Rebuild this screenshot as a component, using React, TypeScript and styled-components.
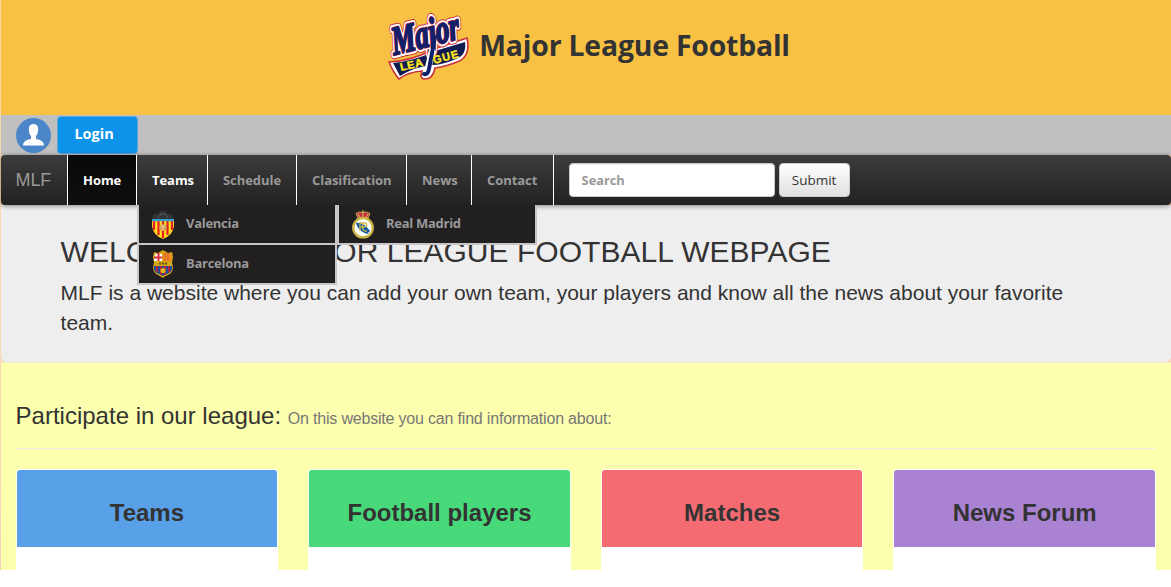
import React from "react";
import styled, { createGlobalStyle } from "styled-components";

const humanist = `"Open Sans", "Noto Sans", sans-serif`;

const GlobalStyle = createGlobalStyle`
  * { box-sizing: border-box; }
  body {
    margin: 0;
    background: #fff;
    color: #333;
    font: 14px/20px "Liberation Sans", Arial, sans-serif;
    overflow: hidden;
  }
  h1, h2, h3, p, ul { margin: 0; padding: 0; }
  ul { list-style: none; }
`;

const Page = styled.div`
  height: 570px;
  padding-left: 0.6px;
  overflow: hidden;
  background: linear-gradient(#f8d9a8, #fbd7b4 50%, #f3d3bd);
`;

const Header = styled.header`
  display: flex;
  justify-content: center;
  height: 115px;
  padding-top: 11px;
  background: #f8c144;
`;

const Logo = styled.svg`
  width: 88px;
  height: 72px;
  flex: none;
  overflow: visible;
`;

const Title = styled.h1`
  width: 310px;
  margin: 14px 0 0 9px;
  font: 700 28.4px/40px ${humanist};
  letter-spacing: -0.2px;
  white-space: nowrap;
`;

const UserBar = styled.div`
  display: flex;
  align-items: flex-start;
  gap: 6px;
  height: 40px;
  padding: 1px 15px 0;
  background: #c0c0c0;
`;

const Avatar = styled.svg`
  width: 35px;
  height: 35px;
  margin-top: 2px;
`;

const LoginButton = styled.button`
  width: 81px;
  height: 38px;
  padding: 0 6px 3px 0;
  border: 1px solid #5da5da;
  border-radius: 4px;
  background: #0d93ea;
  color: #fff;
  font: 700 14.5px/20px ${humanist};
`;

const NavBar = styled.nav`
  position: relative;
  z-index: 2;
  display: flex;
  height: 50px;
  border-radius: 4px;
  background: linear-gradient(#3c3c3c, #222);
  box-shadow: 0 1px 5px rgba(0, 0, 0, 0.45);
`;

const Brand = styled.div`
  width: 67px;
  padding: 15px 0 0 15px;
  border-right: 1px solid #fff;
  color: #999;
  font-size: 18px;
  letter-spacing: -0.2px;
`;

const NavItem = styled.div<{ $width: number; $active?: boolean; $lit?: boolean }>`
  position: relative;
  width: ${(p) => p.$width}px;
  padding: 15px 0 0 15.4px;
  border-right: 1px solid #fff;
  background: ${(p) => (p.$active ? "linear-gradient(#080808, #0f0f0f)" : "none")};
  color: ${(p) => (p.$active || p.$lit ? "#fff" : "#999")};
  font: 700 13px/20px ${humanist};
  letter-spacing: -0.05px;
  white-space: nowrap;
`;

const Dropdown = styled.ul`
  position: absolute;
  top: 50px;
  left: 0;
  display: grid;
  grid-template-columns: 200px 200px;
`;

const DropdownItem = styled.li`
  display: flex;
  align-items: center;
  gap: 11.4px;
  height: 40px;
  padding-left: 12px;
  border: solid #c8c6c8;
  border-width: 0 2px 2px;
  background: #221f20;
  color: #999;
  font: 700 13px/20px ${humanist};
  letter-spacing: -0.28px;

  span { padding-bottom: 2px; }
`;

const Crest = styled.svg`
  width: 24px;
  height: 30px;
`;

const SearchForm = styled.form`
  display: flex;
  gap: 4px;
  padding: 8px 0 0 15px;
`;

const SearchInput = styled.input`
  width: 206px;
  height: 34px;
  padding: 6px 12px;
  border: 1px solid #ccc;
  border-radius: 4px;
  box-shadow: inset 0 1px 1px rgba(0, 0, 0, 0.075);
  font: 700 12.8px/20px ${humanist};

  &::placeholder { color: #999; opacity: 1; }
`;

const SubmitButton = styled.button`
  width: 71px;
  height: 34px;
  padding: 0;
  border: 1px solid #ccc;
  border-radius: 4px;
  background: linear-gradient(#fff, #e0e0e0);
  color: #333;
  font: 400 13.5px/20px ${humanist};
`;

const Jumbotron = styled.section`
  height: 157px;
  padding: 30px 60px 0;
  border-radius: 0 0 6px 6px;
  background: #eee;

  h2 { font-weight: 400; font-size: 30px; line-height: 33px; letter-spacing: 0.03px; white-space: nowrap; }
  p { margin-top: 10px; font-size: 21px; line-height: 30px; }
`;

const Content = styled.main`
  height: 208px;
  padding: 40px 15px 0;
  border-top: 1px solid #f3ecd0;
  background: #fcffad;
`;

const SectionHeading = styled.h3`
  height: 46px;
  border-bottom: 1px solid #eee;
  font-weight: 400;
  font-size: 24px;
  line-height: 26px;

  small { font-size: 16px; letter-spacing: -0.19px; color: #777; }
`;

const CardGrid = styled.div`
  display: grid;
  grid-template-columns: repeat(4, 1fr);
  gap: 30px;
  margin-top: 20px;
`;

const Card = styled.article`
  height: 140px;
  border: 1px solid #fff;
  border-radius: 4px;
  background: #fff;
`;

const CardHeader = styled.h3<{ $color: string }>`
  height: 77px;
  padding-top: 30px;
  border-radius: 3px 3px 0 0;
  background: ${(p) => p.$color};
  font-size: 24px;
  line-height: 26px;
  text-align: center;
`;

const outlines = [
  { stroke: "#c9303a", width: 8.4 },
  { stroke: "#fff", width: 6.4 },
  { stroke: "#dc3540", width: 2.6 },
  { stroke: "#10206a", width: 1.6 },
];

const LeagueLogo = () => (
  <Logo viewBox="0 0 88 72" aria-label="Major League">
    <path
      d="M7 51 Q30 50 52 38 L85 27 Q89 46 75 51 Q62 56 53 57 Q51 68 43 68 Q37 68 40 60 Q26 61 17 68 Q11 61 7 51Z"
      fill="#fff"
      stroke="#c9303a"
      strokeWidth="1.6"
    />
    <path d="M11 52 Q32 50 53 40 L83 31 Q85 44 74 48 Q60 54 50 54 Q32 56 18 65Z" fill="#101b52" />
    {outlines.map((o) => (
      <text
        key={o.stroke}
        transform="translate(12 44) rotate(-14) skewX(-4)"
        fontFamily="Liberation Serif, serif"
        fontStyle="italic"
        fontWeight="700"
        fontSize="40"
        textLength="69"
        lengthAdjust="spacingAndGlyphs"
        fill="#10206a"
        stroke={o.stroke}
        strokeWidth={o.width}
        strokeLinejoin="round"
      >
        Major
      </text>
    ))}
    <path d="M50 40 L45 62" stroke="#fff" strokeWidth="6.5" strokeLinecap="round" />
    <path d="M53 26 L47 58 Q46 64 42 63" stroke="#10206a" strokeWidth="4" strokeLinecap="round" fill="none" />
    <text transform="translate(19 60) rotate(-13)" fontFamily="Liberation Sans, sans-serif" fontWeight="700" fontSize="11" fill="#ffe81c" stroke="#ffe81c" strokeWidth="0.4" textLength="23">
      LEA
    </text>
    <text transform="translate(52 53) rotate(-15)" fontFamily="Liberation Sans, sans-serif" fontWeight="700" fontSize="11" fill="#ffe81c" stroke="#ffe81c" strokeWidth="0.4" textLength="26">
      GUE
    </text>
  </Logo>
);

const ValenciaCrest = () => (
  <Crest viewBox="0 0 24 30">
    <path d="M2 11 Q0 5 5 5 Q8 5 10 1 L12 3 L14 1 Q16 5 19 5 Q24 5 22 11Z" fill="#303436" />
    <path d="M7 9 L10 5 L14 5 L17 9" fill="none" stroke="#555b5c" />
    <path d="M1 10 H23 V17 Q22 26 12 30 Q2 26 1 17Z" fill="#ffdd19" />
    <path d="M3 12V21 M7.5 12V26 M12 12V29 M16.5 12V26 M21 12V21" stroke="#de1f27" strokeWidth="2.2" />
    <path d="M1 10 H23 V12.2 H1Z" fill="#35a2d4" />
    <circle cx="12" cy="18.5" r="3.5" fill="#d6a25c" />
    <path d="M10 17l2 1 2-1m-2 1v3" stroke="#f1d39a" fill="none" />
  </Crest>
);

const BarcelonaCrest = () => (
  <Crest viewBox="0 0 24 30">
    <path d="M3 3 L7 4 L12 1 L17 4 L21 3 L22 8 L21 14 Q24 23 17 26 Q14 27 12 29 Q9 27 7 26 Q0 23 3 14 L2 8Z" fill="#d5a916" />
    <path d="M4 5 H11 V12 H3Z" fill="#fff" />
    <path d="M7.5 4V12 M3 8.5H11" stroke="#e12c3c" strokeWidth="2" />
    <path d="M12 4 H20 L21 12 H12Z" fill="#ee8b24" />
    <path d="M14 4V12 M17 4V12" stroke="#db5c27" />
    <path d="M3 17H21 Q22 23 16 25 L12 27 L8 25 Q2 23 3 17Z" fill="#234a93" />
    <path d="M6 17V23 M10 17V26 M14 17V26 M18 17V23" stroke="#a92347" strokeWidth="2" />
    <circle cx="12" cy="21.5" r="2.6" fill="#e0b51c" />
    <path d="M8 14.5H16" stroke="#665016" strokeWidth="2" strokeDasharray="2 1" />
  </Crest>
);

const MadridCrest = () => (
  <Crest viewBox="0 0 24 30">
    <path d="M7 9 L5 4.5 Q8 2 12 3.5 Q16 2 19 4.5 L17 9Z" fill="#c52d42" stroke="#c8ad43" />
    <path d="M12 1V8 M7 5L9 8 M17 5L15 8" stroke="#e5c559" />
    <circle cx="12" cy="18.7" r="9.7" fill="#fff" stroke="#c9b747" strokeWidth="2.4" />
    <path d="M5 14 Q12 12 19 22 L16 25 Q7 22 5 14Z" fill="#125aa6" />
    <path d="M9 13V22 M9 14H15 Q17 18 13 18H10 M12 15Q10 23 16 22" stroke="#d3ba45" strokeWidth="1.3" fill="none" />
  </Crest>
);

const teams = [
  { name: "Valencia", Icon: ValenciaCrest },
  { name: "Real Madrid", Icon: MadridCrest },
  { name: "Barcelona", Icon: BarcelonaCrest },
];

const links = [
  { label: "Schedule", width: 89 },
  { label: "Clasification", width: 110 },
  { label: "News", width: 65 },
  { label: "Contact", width: 82 },
];

const cards = [
  { title: "Teams", color: "#58a0e8" },
  { title: "Football players", color: "#48da7a" },
  { title: "Matches", color: "#f46b71" },
  { title: "News Forum", color: "#a983d2" },
];

export default function App() {
  return (
    <>
      <GlobalStyle />
      <Page>
        <Header>
          <LeagueLogo />
          <Title>Major League Football</Title>
        </Header>
        <UserBar>
          <Avatar viewBox="0 0 35 35">
            <circle cx="17.5" cy="17.5" r="17.5" fill="#4b86c9" />
            <path d="M12.8 12 Q12.5 6 17.5 6 Q22.5 6 22.2 12 Q22 16 20 18 V21 Q28 22 28 27.5 H7 Q7 22 15 21 V18 Q13 16 12.8 12Z" fill="#fff" />
          </Avatar>
          <LoginButton>Login</LoginButton>
        </UserBar>
        <NavBar>
          <Brand>MLF</Brand>
          <NavItem $width={69} $active>Home</NavItem>
          <NavItem $width={71} $lit>
            Teams
            <Dropdown>
              {teams.map(({ name, Icon }) => (
                <DropdownItem key={name}>
                  <Icon />
                  <span>{name}</span>
                </DropdownItem>
              ))}
            </Dropdown>
          </NavItem>
          {links.map((l) => (
            <NavItem key={l.label} $width={l.width}>{l.label}</NavItem>
          ))}
          <SearchForm>
            <SearchInput placeholder="Search" />
            <SubmitButton type="button">Submit</SubmitButton>
          </SearchForm>
        </NavBar>
        <Jumbotron>
          <h2>WELCOME TO MAJOR LEAGUE FOOTBALL WEBPAGE</h2>
          <p>MLF is a website where you can add your own team, your players and know all the news about your favorite team.</p>
        </Jumbotron>
        <Content>
          <SectionHeading>
            Participate in our league: <small>On this website you can find information about:</small>
          </SectionHeading>
          <CardGrid>
            {cards.map((c) => (
              <Card key={c.title}>
                <CardHeader $color={c.color}>{c.title}</CardHeader>
              </Card>
            ))}
          </CardGrid>
        </Content>
      </Page>
    </>
  );
}
